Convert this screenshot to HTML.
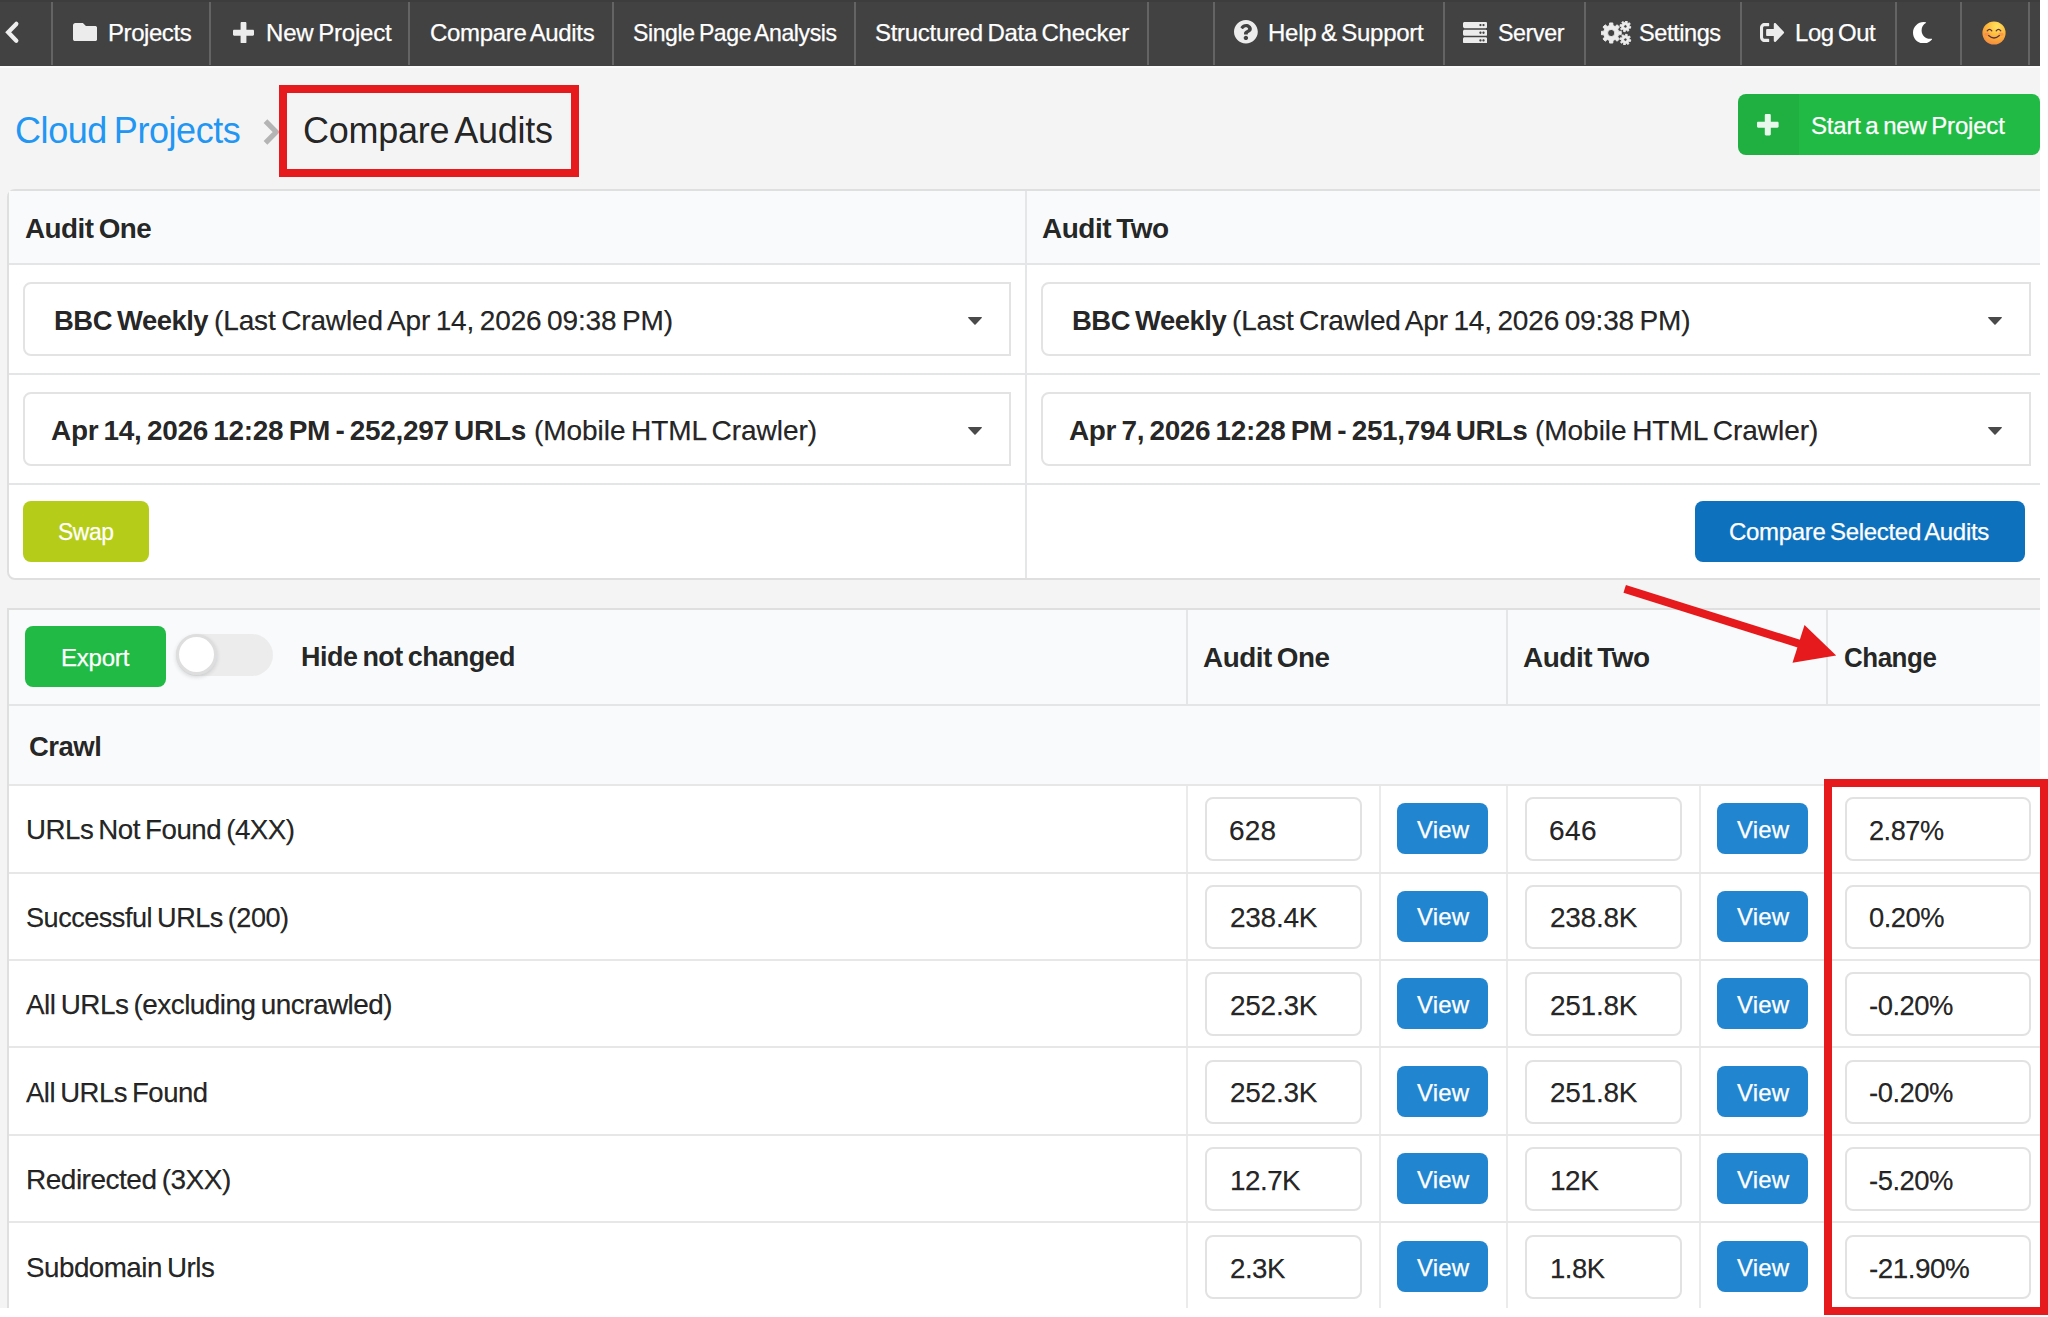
<!DOCTYPE html>
<html lang="en">
<head>
<meta charset="utf-8">
<title>Compare Audits - Cloud Projects</title>
<style>html,body{margin:0;padding:0;background:#fff;}
body{width:2048px;height:1317px;overflow:hidden;position:relative;font-family:"Liberation Sans",sans-serif;color:rgba(0,0,0,.87);}
#page{position:absolute;left:0;top:0;width:2040px;height:1307.5px;background:#f4f4f4;overflow:hidden;}
#page *, .red, .mask, svg.i{position:absolute;box-sizing:border-box;}
.t{-webkit-text-stroke:.25px currentColor;transform-origin:0 50%;white-space:nowrap;line-height:1;margin:0;font-weight:400;text-decoration:none;font-style:normal;}
h1,h3{margin:0;font-weight:400;}
#nav{left:0;top:0;width:2040px;height:66px;background:#424242;border-top:2px solid #3c3d3c;box-shadow:0 2px 0 #fbfbfb;}
#nav .dv{top:0;width:2px;height:63px;background:#646464;}
#nav .ni{left:0;top:-2px;width:0;height:0;}
.card,.tbl{background:#fff;border:2px solid #dfdfe0;border-radius:8px;}
.tbl{border-radius:0;}
.hd{background:#f9fafb;}
.hl{background:#e4e5e6;}
.vl{background:#e5e6e7;}
.hl2{background:#e7e7e8;}
.vl2{background:#ebebec;}
.sel{background:#fff;border:2px solid #e3e3e4;border-radius:8px 0 0 8px;}
.inp{background:#fff;border:2px solid #e2e2e3;border-radius:8px;}
.btn{border-radius:8px;display:block;}

.green{background:#21ba45;}
.olive{background:#b5cc18;}
.blue{background:#2185d0;}
.blue2{background:#0e71bd;}
.start .ic{left:0;top:0;height:100%;background:rgba(0,0,0,.05);border-radius:8px 0 0 8px;}
.tog{width:97.5px;height:41.5px;border-radius:21px;background:#ececed;}
.tog i{left:0;top:0;width:41px;height:41px;border-radius:50%;background:#fff;box-shadow:0 2px 4px rgba(34,36,38,.16),0 0 0 3px rgba(34,36,38,.15) inset;}
.red{border:8px solid #e61a1c;}
.mask{background:#fff;}
b.t,h3.t,label.t,.crumbs .t{-webkit-text-stroke:0;}
</style>
</head>
<body>
<div id="page">
<nav id="nav">
<i class="dv" style="left:51px"></i><i class="dv" style="left:209px"></i><i class="dv" style="left:408.2px"></i><i class="dv" style="left:611.7px"></i><i class="dv" style="left:854px"></i><i class="dv" style="left:1146.9px"></i><i class="dv" style="left:1212.8px"></i><i class="dv" style="left:1443.1px"></i><i class="dv" style="left:1583.6px"></i><i class="dv" style="left:1739.8px"></i><i class="dv" style="left:1894.9px"></i><i class="dv" style="left:1959.8px"></i><i class="dv" style="left:2028px"></i>
<a class="ni"><svg class="i" style="left:3px;top:19px" width="20" height="27" viewBox="3 19 20 27" preserveAspectRatio="none"><path d="M16.3 23.9L8.2 32.3L16.3 40.7" fill="none" stroke="#eeeeee" stroke-width="4.3" stroke-linecap="round" stroke-linejoin="miter"/></svg></a>
<a class="ni"><svg class="i" style="left:73px;top:23.1px" width="24.3" height="18.2" viewBox="0 64 512 384" preserveAspectRatio="none"><path d="M464 128H272l-64-64H48C21.49 64 0 85.49 0 112v288c0 26.51 21.49 48 48 48h416c26.51 0 48-21.49 48-48V176c0-26.51-21.49-48-48-48z" fill="#ececec"/></svg><span class="t" id="n1" style="left:108.00px;top:21.01px;font-size:24px;letter-spacing:-0.432px;color:#fff;">Projects</span></a>
<a class="ni"><svg class="i" style="left:233.1px;top:21.5px" width="21" height="21.5" viewBox="0 32 448 448" preserveAspectRatio="none"><path d="M448 294.2v-76.4c0-13.3-10.7-24-24-24H286.2V56c0-13.3-10.7-24-24-24h-76.4c-13.3 0-24 10.7-24 24v137.8H24c-13.3 0-24 10.7-24 24v76.4c0 13.3 10.7 24 24 24h137.8V456c0 13.3 10.7 24 24 24h76.4c13.3 0 24-10.700 24-24V318.2H424c13.3 0 24-10.7 24-24z" fill="#ececec"/></svg><span class="t" id="n2" style="left:266.00px;top:21.01px;font-size:24px;letter-spacing:-0.183px;word-spacing:-1.80px;color:#fff;">New Project</span></a>
<a class="ni"><span class="t" id="n3" style="left:430.00px;top:21.01px;font-size:24px;letter-spacing:-0.328px;word-spacing:-1.80px;color:#fff;">Compare Audits</span></a>
<a class="ni"><span class="t" id="n4" style="left:633.00px;top:21.01px;font-size:24px;letter-spacing:-0.432px;word-spacing:-1.80px;transform:scaleX(0.9609);color:#fff;">Single Page Analysis</span></a>
<a class="ni"><span class="t" id="n5" style="left:875.00px;top:21.01px;font-size:24px;letter-spacing:-0.287px;word-spacing:-1.80px;color:#fff;">Structured Data Checker</span></a>
<a class="ni"><svg class="i" style="left:1234px;top:20.4px" width="23.8" height="23.6" viewBox="8 8 496 496" preserveAspectRatio="none"><path d="M504 256c0 136.997-111.043 248-248 248S8 392.997 8 256C8 119.083 119.043 8 256 8s248 111.083 248 248zM262.655 90c-54.497 0-89.255 22.957-116.549 63.758-3.536 5.286-2.353 12.415 2.715 16.258l34.699 26.31c5.205 3.947 12.621 3.008 16.665-2.122 17.864-22.658 30.113-35.797 57.303-35.797 20.429 0 45.698 13.148 45.698 32.958 0 14.976-12.363 22.667-32.534 33.976C247.128 238.528 216 254.941 216 296v4c0 6.627 5.373 12 12 12h56c6.627 0 12-5.373 12-12v-1.333c0-28.462 83.186-29.647 83.186-106.667 0-58.002-60.165-102-116.531-102zM256 338c-25.365 0-46 20.635-46 46 0 25.364 20.635 46 46 46s46-20.636 46-46c0-25.365-20.635-46-46-46z" fill="#ececec"/></svg><span class="t" id="n6" style="left:1268.00px;top:21.01px;font-size:24px;letter-spacing:-0.268px;word-spacing:-1.80px;color:#fff;">Help &amp; Support</span></a>
<a class="ni"><svg class="i" style="left:1463.2px;top:21.5px" width="24.3" height="21.5" viewBox="0 32 512 448" preserveAspectRatio="none"><path d="M480 160H32c-17.673 0-32-14.327-32-32V64c0-17.673 14.327-32 32-32h448c17.673 0 32 14.327 32 32v64c0 17.673-14.327 32-32 32zm-48-88c-13.255 0-24 10.745-24 24s10.745 24 24 24 24-10.745 24-24-10.745-24-24-24zm-64 0c-13.255 0-24 10.745-24 24s10.745 24 24 24 24-10.745 24-24-10.745-24-24-24zm112 248H32c-17.673 0-32-14.327-32-32v-64c0-17.673 14.327-32 32-32h448c17.673 0 32 14.327 32 32v64c0 17.673-14.327 32-32 32zm-48-88c-13.255 0-24 10.745-24 24s10.745 24 24 24 24-10.745 24-24-10.745-24-24-24zm-64 0c-13.255 0-24 10.745-24 24s10.745 24 24 24 24-10.745 24-24-10.745-24-24-24zm112 248H32c-17.673 0-32-14.327-32-32v-64c0-17.673 14.327-32 32-32h448c17.673 0 32 14.327 32 32v64c0 17.673-14.327 32-32 32zm-48-88c-13.255 0-24 10.745-24 24s10.745 24 24 24 24-10.745 24-24-10.745-24-24-24zm-64 0c-13.255 0-24 10.745-24 24s10.745 24 24 24 24-10.745 24-24-10.745-24-24-24z" fill="#ececec"/></svg><span class="t" id="n7" style="left:1498.00px;top:21.01px;font-size:24px;letter-spacing:-0.432px;transform:scaleX(0.9692);color:#fff;">Server</span></a>
<a class="ni"><svg class="i" style="left:1601.4px;top:20.5px" width="30.6" height="24" viewBox="0 0 30.6 24" preserveAspectRatio="none"><path d="M17.58 10.17L20.27 10.40L20.27 13.60L17.58 13.83L16.71 15.92L18.45 18.00L16.20 20.25L14.12 18.51L12.03 19.38L11.80 22.07L8.60 22.07L8.37 19.38L6.28 18.51L4.20 20.25L1.95 18.00L3.69 15.92L2.82 13.83L0.13 13.60L0.13 10.40L2.82 10.17L3.69 8.08L1.95 6.00L4.20 3.75L6.28 5.49L8.37 4.62L8.60 1.93L11.80 1.93L12.03 4.62L14.12 5.49L16.20 3.75L18.45 6.00L16.71 8.08zM13.80 12.00A3.60 3.60 0 1 0 6.60 12.00A3.60 3.60 0 1 0 13.80 12.00zM28.30 5.23L29.80 5.63L29.46 7.29L27.92 7.07L27.27 8.04L28.05 9.38L26.64 10.31L25.71 9.07L24.57 9.30L24.17 10.80L22.51 10.46L22.73 8.92L21.76 8.27L20.42 9.05L19.49 7.64L20.73 6.71L20.50 5.57L19.00 5.17L19.34 3.51L20.88 3.73L21.53 2.76L20.75 1.42L22.16 0.49L23.09 1.73L24.23 1.50L24.63 0.00L26.29 0.34L26.07 1.88L27.04 2.53L28.38 1.75L29.31 3.16L28.07 4.09zM26.10 5.40A1.70 1.70 0 1 0 22.70 5.40A1.70 1.70 0 1 0 26.10 5.40zM28.30 18.43L29.80 18.83L29.46 20.49L27.92 20.27L27.27 21.24L28.05 22.58L26.64 23.51L25.71 22.27L24.57 22.50L24.17 24.00L22.51 23.66L22.73 22.12L21.76 21.47L20.42 22.25L19.49 20.84L20.73 19.91L20.50 18.77L19.00 18.37L19.34 16.71L20.88 16.93L21.53 15.96L20.75 14.62L22.16 13.69L23.09 14.93L24.23 14.70L24.63 13.20L26.29 13.54L26.07 15.08L27.04 15.73L28.38 14.95L29.31 16.36L28.07 17.29zM26.10 18.60A1.70 1.70 0 1 0 22.70 18.60A1.70 1.70 0 1 0 26.10 18.60z" fill="#ececec" fill-rule="evenodd" stroke="#ececec" stroke-width="0.9" stroke-linejoin="round"/></svg><span class="t" id="n8" style="left:1639.00px;top:21.01px;font-size:24px;letter-spacing:-0.432px;transform:scaleX(0.9808);color:#fff;">Settings</span></a>
<a class="ni"><svg class="i" style="left:1760.1px;top:23px" width="24.5" height="19" viewBox="0 64 512 384" preserveAspectRatio="none"><path d="M497 273L329 441c-15 15-41 4.5-41-17v-96H152c-13.3 0-24-10.7-24-24v-96c0-13.3 10.7-24 24-24h136V88c0-21.4 25.9-32 41-17l168 168c9.3 9.4 9.3 24.6 0 34zM192 436v-40c0-6.6-5.4-12-12-12H96c-17.7 0-32-14.3-32-32V160c0-17.7 14.3-32 32-32h84c6.6 0 12-5.4 12-12V76c0-6.600-5.4-12-12-12H96c-53 0-96 43-96 96v192c0 53 43 96 96 96h84c6.6 0 12-5.4 12-12z" fill="#ececec"/></svg><span class="t" id="n9" style="left:1795.00px;top:21.01px;font-size:24px;letter-spacing:-0.432px;word-spacing:-1.80px;transform:scaleX(0.9971);color:#fff;">Log Out</span></a>
<a class="ni"><svg class="i" style="left:1912.6px;top:21.5px" width="19.2" height="21.5" viewBox="27 0 458 512" preserveAspectRatio="none"><path d="M283.211 512c78.962 0 151.079-35.925 198.857-94.792 7.068-8.708-.639-21.43-11.562-19.35-124.203 23.654-238.262-71.576-238.262-196.954 0-72.222 38.662-138.635 101.498-174.394 9.686-5.512 7.25-20.197-3.756-22.23A258.156 258.156 0 0 0 283.211 0c-141.309 0-256 114.511-256 256 0 141.309 114.511 256 256 256z" fill="#ffffff"/></svg></a>
<a class="ni"><svg class="i" style="left:1982px;top:21.3px" width="24" height="24" viewBox="0 0 24 24" preserveAspectRatio="none"><title>😊</title><defs><radialGradient id="eg" cx="0.62" cy="0.22" r="0.95"><stop offset="0" stop-color="#ffe55e"/><stop offset="0.45" stop-color="#fdb73a"/><stop offset="0.8" stop-color="#f6913c"/><stop offset="1" stop-color="#ef6aa0"/></radialGradient></defs><circle cx="12" cy="12" r="11.6" fill="url(#eg)"/><ellipse cx="5" cy="13.2" rx="2.6" ry="1.8" fill="#f4705e" opacity=".45"/><ellipse cx="19" cy="13.2" rx="2.6" ry="1.8" fill="#f4705e" opacity=".45"/><path d="M5.2 9.8q2.3-3 4.6 0M14.2 9.8q2.3-3 4.6 0" fill="none" stroke="#5b3347" stroke-width="1.3" stroke-linecap="round"/><path d="M6.6 14.6q5.4 4.8 10.800 0" fill="none" stroke="#5b3347" stroke-width="1.3" stroke-linecap="round"/></svg></a>
</nav>
<h1 class="crumbs" style="left:0;top:0"><a class="t" id="b1" style="left:15.00px;top:113.01px;font-size:36px;letter-spacing:-0.428px;word-spacing:-2.70px;color:#2196f3;">Cloud Projects</a><svg class="i" style="left:260px;top:116px" width="22" height="32" viewBox="260 116 22 32" preserveAspectRatio="none"><path d="M265.5 121.2L276.2 132L265.5 142.800" fill="none" stroke="#b4b4b4" stroke-width="5.2" stroke-linecap="butt" stroke-linejoin="miter"/></svg><span class="t" id="b2" style="left:303.00px;top:113.01px;font-size:36px;letter-spacing:-0.264px;word-spacing:-2.70px;">Compare Audits</span></h1>
<a class="btn green start" style="left:1738px;top:94.3px;width:302px;height:60.4px;"><b class="ic" style="width:60.5px"></b><svg class="i" style="left:19.4px;top:19.9px" width="21.6" height="21.4" viewBox="0 32 448 448" preserveAspectRatio="none"><path d="M448 294.2v-76.4c0-13.3-10.7-24-24-24H286.2V56c0-13.3-10.7-24-24-24h-76.4c-13.3 0-24 10.7-24 24v137.8H24c-13.3 0-24 10.7-24 24v76.4c0 13.3 10.7 24 24 24h137.8V456c0 13.3 10.7 24 24 24h76.4c13.3 0 24-10.700 24-24V318.2H424c13.3 0 24-10.7 24-24z" fill="#e9f8ec"/></svg><span class="t" id="sp" style="left:73.00px;top:19.71px;font-size:24px;letter-spacing:-0.198px;word-spacing:-1.80px;color:#fff;">Start a new Project</span></a>
<section class="card" style="left:7px;top:189px;width:2040px;height:391px">
</section>
<div class="hd" style="left:9px;top:191px;width:2031px;height:72px;"></div>
<div class="hl" style="left:9px;top:263px;width:2031px;height:2px;"></div><div class="hl" style="left:9px;top:373px;width:2031px;height:2px;"></div><div class="hl" style="left:9px;top:483px;width:2031px;height:2px;"></div><div class="vl" style="left:1025px;top:191px;width:2px;height:387px;"></div>
<h3 class="t" id="h1" style="left:25.00px;top:215.00px;font-size:28px;font-weight:700;letter-spacing:-0.504px;word-spacing:-2.10px;transform:scaleX(0.9937);">Audit One</h3><h3 class="t" id="h2" style="left:1042.00px;top:215.00px;font-size:28px;font-weight:700;letter-spacing:-0.504px;word-spacing:-2.10px;">Audit Two</h3>
<div class="sel" style="left:23px;top:282px;width:988px;height:74px;"></div><b class="t" id="s1a" style="left:54.00px;top:307.00px;font-size:28px;font-weight:700;letter-spacing:-0.504px;word-spacing:-2.10px;transform:scaleX(0.9796);">BBC Weekly</b><span class="t" id="s1b" style="left:214.00px;top:307.00px;font-size:28px;letter-spacing:-0.130px;word-spacing:-2.10px;">(Last Crawled Apr 14, 2026 09:38 PM)</span><svg class="i" style="left:968px;top:317.2px" width="14" height="8" viewBox="0 0 14 8" preserveAspectRatio="none"><path d="M0.6 0h12.8q0.9 0.1 0.3 0.9L7.6 7.6q-0.6 0.5-1.2 0L0.3 0.9q-0.6-0.8 0.3-0.9z" fill="#4a4a4a"/></svg>
<div class="sel" style="left:1041px;top:282px;width:990px;height:74px;"></div><b class="t" id="s2a" style="left:1072.00px;top:307.00px;font-size:28px;font-weight:700;letter-spacing:-0.504px;word-spacing:-2.10px;transform:scaleX(0.9803);">BBC Weekly</b><span class="t" id="s2b" style="left:1232.00px;top:307.00px;font-size:28px;letter-spacing:-0.146px;word-spacing:-2.10px;">(Last Crawled Apr 14, 2026 09:38 PM)</span><svg class="i" style="left:1988px;top:317.2px" width="14" height="8" viewBox="0 0 14 8" preserveAspectRatio="none"><path d="M0.6 0h12.8q0.9 0.1 0.3 0.9L7.6 7.6q-0.6 0.5-1.2 0L0.3 0.9q-0.6-0.8 0.3-0.9z" fill="#4a4a4a"/></svg>
<div class="sel" style="left:23px;top:392px;width:988px;height:74px;"></div><b class="t" id="s3a" style="left:51.00px;top:417.00px;font-size:28px;font-weight:700;letter-spacing:-0.320px;word-spacing:-2.10px;">Apr 14, 2026 12:28 PM - 252,297 URLs</b><span class="t" id="s3b" style="left:534.00px;top:417.00px;font-size:28px;letter-spacing:-0.057px;word-spacing:-2.10px;">(Mobile HTML Crawler)</span><svg class="i" style="left:968px;top:427.2px" width="14" height="8" viewBox="0 0 14 8" preserveAspectRatio="none"><path d="M0.6 0h12.8q0.9 0.1 0.3 0.9L7.6 7.6q-0.6 0.5-1.2 0L0.3 0.9q-0.6-0.8 0.3-0.9z" fill="#4a4a4a"/></svg>
<div class="sel" style="left:1041px;top:392px;width:990px;height:74px;"></div><b class="t" id="s4a" style="left:1069.00px;top:417.00px;font-size:28px;font-weight:700;letter-spacing:-0.357px;word-spacing:-2.10px;">Apr 7, 2026 12:28 PM - 251,794 URLs</b><span class="t" id="s4b" style="left:1535.00px;top:417.00px;font-size:28px;letter-spacing:-0.042px;word-spacing:-2.10px;">(Mobile HTML Crawler)</span><svg class="i" style="left:1988px;top:427.2px" width="14" height="8" viewBox="0 0 14 8" preserveAspectRatio="none"><path d="M0.6 0h12.8q0.9 0.1 0.3 0.9L7.6 7.6q-0.6 0.5-1.2 0L0.3 0.9q-0.6-0.8 0.3-0.9z" fill="#4a4a4a"/></svg>
<a class="btn olive" style="left:23px;top:501px;width:126px;height:61px;"><span class="t" id="sw" style="left:35.00px;top:19.01px;font-size:24px;letter-spacing:-0.432px;transform:scaleX(0.9514);color:#fff;">Swap</span></a><a class="btn blue2" style="left:1694.6px;top:501px;width:330.8px;height:61px;"><span class="t" id="cs" style="left:34.40px;top:19.01px;font-size:24px;letter-spacing:-0.315px;word-spacing:-1.80px;color:#fff;">Compare Selected Audits</span></a>
<section class="tbl" style="left:7px;top:608px;width:2040px;height:720px"></section>
<div class="hd" style="left:9px;top:610px;width:2031px;height:174px;"></div><div class="hl" style="left:9px;top:704px;width:2031px;height:2px;"></div><div class="vl" style="left:1186px;top:610px;width:2px;height:94px;"></div><div class="vl" style="left:1506px;top:610px;width:2px;height:94px;"></div><div class="vl" style="left:1826px;top:610px;width:2px;height:94px;"></div>
<a class="btn green" style="left:25px;top:626px;width:141px;height:61px;"><span class="t" id="ex" style="left:36.00px;top:20.01px;font-size:24px;letter-spacing:-0.208px;color:#fff;">Export</span></a><span class="tog" style="left:175.8px;top:634px"><i></i></span><label class="t" id="hn" style="left:301.00px;top:643.00px;font-size:28px;font-weight:700;letter-spacing:-0.504px;word-spacing:-2.10px;transform:scaleX(0.9615);">Hide not changed</label><b class="t" id="t1" style="left:1203.00px;top:644.00px;font-size:28px;font-weight:700;letter-spacing:-0.504px;word-spacing:-2.10px;transform:scaleX(0.9956);">Audit One</b><b class="t" id="t2" style="left:1523.00px;top:644.00px;font-size:28px;font-weight:700;letter-spacing:-0.504px;word-spacing:-2.10px;">Audit Two</b><b class="t" id="t3" style="left:1844.00px;top:644.00px;font-size:28px;font-weight:700;letter-spacing:-0.504px;transform:scaleX(0.9267);">Change</b>
<b class="t" id="cr" style="left:29.00px;top:733.00px;font-size:28px;font-weight:700;letter-spacing:-0.504px;transform:scaleX(0.9813);">Crawl</b>
<div class="hl2" style="left:9px;top:784px;width:2031px;height:2px;"></div><div class="vl2" style="left:1186px;top:786px;width:2px;height:86px;"></div><div class="vl2" style="left:1379px;top:786px;width:2px;height:86px;"></div><div class="vl2" style="left:1506px;top:786px;width:2px;height:86px;"></div><div class="vl2" style="left:1699px;top:786px;width:2px;height:86px;"></div><div class="vl2" style="left:1826px;top:786px;width:2px;height:86px;"></div><span class="t" id="r0l" style="left:26.00px;top:816.00px;font-size:28px;letter-spacing:-0.504px;word-spacing:-2.10px;transform:scaleX(0.9889);">URLs Not Found (4XX)</span><div class="inp" style="left:1205px;top:797px;width:156.5px;height:64px;"></div><span class="t" id="r0a" style="left:1229.00px;top:817.01px;font-size:28px;letter-spacing:0.185px;">628</span><a class="btn blue sm" style="left:1397px;top:803px;width:91px;height:51px;"><span class="t" id="r0v" style="left:20.00px;top:15.01px;font-size:24px;letter-spacing:0.180px;color:#fff;">View</span></a><div class="inp" style="left:1525px;top:797px;width:156.5px;height:64px;"></div><span class="t" id="r0b" style="left:1549.00px;top:817.01px;font-size:28px;letter-spacing:0.430px;">646</span><a class="btn blue sm" style="left:1717px;top:803px;width:91px;height:51px;"><span class="t" id="r0w" style="left:20.00px;top:15.01px;font-size:24px;letter-spacing:0.183px;color:#fff;">View</span></a><div class="inp" style="left:1845px;top:797px;width:186px;height:64px;"></div><span class="t" id="r0c" style="left:1869.00px;top:817.01px;font-size:28px;letter-spacing:-0.504px;transform:scaleX(0.9702);">2.87%</span>
<div class="hl2" style="left:9px;top:872px;width:2031px;height:2px;"></div><div class="vl2" style="left:1186px;top:874px;width:2px;height:85px;"></div><div class="vl2" style="left:1379px;top:874px;width:2px;height:85px;"></div><div class="vl2" style="left:1506px;top:874px;width:2px;height:85px;"></div><div class="vl2" style="left:1699px;top:874px;width:2px;height:85px;"></div><div class="vl2" style="left:1826px;top:874px;width:2px;height:85px;"></div><span class="t" id="r1l" style="left:26.00px;top:904.01px;font-size:28px;letter-spacing:-0.504px;word-spacing:-2.10px;transform:scaleX(0.9671);">Successful URLs (200)</span><div class="inp" style="left:1205px;top:885px;width:156.5px;height:64px;"></div><span class="t" id="r1a" style="left:1230.00px;top:904.01px;font-size:28px;letter-spacing:-0.262px;">238.4K</span><a class="btn blue sm" style="left:1397px;top:891px;width:91px;height:51px;"><span class="t" id="r1v" style="left:20.00px;top:14.00px;font-size:24px;letter-spacing:0.180px;color:#fff;">View</span></a><div class="inp" style="left:1525px;top:885px;width:156.5px;height:64px;"></div><span class="t" id="r1b" style="left:1550.00px;top:904.01px;font-size:28px;letter-spacing:-0.262px;">238.8K</span><a class="btn blue sm" style="left:1717px;top:891px;width:91px;height:51px;"><span class="t" id="r1w" style="left:20.00px;top:14.00px;font-size:24px;letter-spacing:0.183px;color:#fff;">View</span></a><div class="inp" style="left:1845px;top:885px;width:186px;height:64px;"></div><span class="t" id="r1c" style="left:1869.00px;top:904.01px;font-size:28px;letter-spacing:-0.504px;transform:scaleX(0.9761);">0.20%</span>
<div class="hl2" style="left:9px;top:959px;width:2031px;height:2px;"></div><div class="vl2" style="left:1186px;top:961px;width:2px;height:85px;"></div><div class="vl2" style="left:1379px;top:961px;width:2px;height:85px;"></div><div class="vl2" style="left:1506px;top:961px;width:2px;height:85px;"></div><div class="vl2" style="left:1699px;top:961px;width:2px;height:85px;"></div><div class="vl2" style="left:1826px;top:961px;width:2px;height:85px;"></div><span class="t" id="r2l" style="left:26.00px;top:991.00px;font-size:28px;letter-spacing:-0.504px;word-spacing:-2.10px;transform:scaleX(0.9958);">All URLs (excluding uncrawled)</span><div class="inp" style="left:1205px;top:972px;width:156.5px;height:64px;"></div><span class="t" id="r2a" style="left:1230.00px;top:992.01px;font-size:28px;letter-spacing:-0.262px;">252.3K</span><a class="btn blue sm" style="left:1397px;top:978px;width:91px;height:51px;"><span class="t" id="r2v" style="left:20.00px;top:15.01px;font-size:24px;letter-spacing:0.180px;color:#fff;">View</span></a><div class="inp" style="left:1525px;top:972px;width:156.5px;height:64px;"></div><span class="t" id="r2b" style="left:1550.00px;top:992.01px;font-size:28px;letter-spacing:-0.262px;">251.8K</span><a class="btn blue sm" style="left:1717px;top:978px;width:91px;height:51px;"><span class="t" id="r2w" style="left:20.00px;top:15.01px;font-size:24px;letter-spacing:0.183px;color:#fff;">View</span></a><div class="inp" style="left:1845px;top:972px;width:186px;height:64px;"></div><span class="t" id="r2c" style="left:1869.00px;top:992.01px;font-size:28px;letter-spacing:-0.504px;transform:scaleX(0.9791);">-0.20%</span>
<div class="hl2" style="left:9px;top:1046px;width:2031px;height:2px;"></div><div class="vl2" style="left:1186px;top:1048px;width:2px;height:86px;"></div><div class="vl2" style="left:1379px;top:1048px;width:2px;height:86px;"></div><div class="vl2" style="left:1506px;top:1048px;width:2px;height:86px;"></div><div class="vl2" style="left:1699px;top:1048px;width:2px;height:86px;"></div><div class="vl2" style="left:1826px;top:1048px;width:2px;height:86px;"></div><span class="t" id="r3l" style="left:26.00px;top:1079.01px;font-size:28px;letter-spacing:-0.504px;word-spacing:-2.10px;transform:scaleX(0.9823);">All URLs Found</span><div class="inp" style="left:1205px;top:1060px;width:156.5px;height:64px;"></div><span class="t" id="r3a" style="left:1230.00px;top:1079.01px;font-size:28px;letter-spacing:-0.262px;">252.3K</span><a class="btn blue sm" style="left:1397px;top:1066px;width:91px;height:51px;"><span class="t" id="r3v" style="left:20.00px;top:15.01px;font-size:24px;letter-spacing:0.180px;color:#fff;">View</span></a><div class="inp" style="left:1525px;top:1060px;width:156.5px;height:64px;"></div><span class="t" id="r3b" style="left:1550.00px;top:1079.01px;font-size:28px;letter-spacing:-0.262px;">251.8K</span><a class="btn blue sm" style="left:1717px;top:1066px;width:91px;height:51px;"><span class="t" id="r3w" style="left:20.00px;top:15.01px;font-size:24px;letter-spacing:0.183px;color:#fff;">View</span></a><div class="inp" style="left:1845px;top:1060px;width:186px;height:64px;"></div><span class="t" id="r3c" style="left:1869.00px;top:1079.01px;font-size:28px;letter-spacing:-0.504px;transform:scaleX(0.9791);">-0.20%</span>
<div class="hl2" style="left:9px;top:1134px;width:2031px;height:2px;"></div><div class="vl2" style="left:1186px;top:1136px;width:2px;height:85px;"></div><div class="vl2" style="left:1379px;top:1136px;width:2px;height:85px;"></div><div class="vl2" style="left:1506px;top:1136px;width:2px;height:85px;"></div><div class="vl2" style="left:1699px;top:1136px;width:2px;height:85px;"></div><div class="vl2" style="left:1826px;top:1136px;width:2px;height:85px;"></div><span class="t" id="r4l" style="left:26.00px;top:1166.01px;font-size:28px;letter-spacing:-0.492px;word-spacing:-2.10px;">Redirected (3XX)</span><div class="inp" style="left:1205px;top:1147px;width:156.5px;height:64px;"></div><span class="t" id="r4a" style="left:1230.00px;top:1167.01px;font-size:28px;letter-spacing:-0.504px;transform:scaleX(0.9932);">12.7K</span><a class="btn blue sm" style="left:1397px;top:1153px;width:91px;height:51px;"><span class="t" id="r4v" style="left:20.00px;top:15.00px;font-size:24px;letter-spacing:0.180px;color:#fff;">View</span></a><div class="inp" style="left:1525px;top:1147px;width:156.5px;height:64px;"></div><span class="t" id="r4b" style="left:1550.00px;top:1167.01px;font-size:28px;letter-spacing:-0.504px;">12K</span><a class="btn blue sm" style="left:1717px;top:1153px;width:91px;height:51px;"><span class="t" id="r4w" style="left:20.00px;top:15.00px;font-size:24px;letter-spacing:0.183px;color:#fff;">View</span></a><div class="inp" style="left:1845px;top:1147px;width:186px;height:64px;"></div><span class="t" id="r4c" style="left:1869.00px;top:1167.01px;font-size:28px;letter-spacing:-0.504px;transform:scaleX(0.9791);">-5.20%</span>
<div class="hl2" style="left:9px;top:1221px;width:2031px;height:2px;"></div><div class="vl2" style="left:1186px;top:1223px;width:2px;height:86px;"></div><div class="vl2" style="left:1379px;top:1223px;width:2px;height:86px;"></div><div class="vl2" style="left:1506px;top:1223px;width:2px;height:86px;"></div><div class="vl2" style="left:1699px;top:1223px;width:2px;height:86px;"></div><div class="vl2" style="left:1826px;top:1223px;width:2px;height:86px;"></div><span class="t" id="r5l" style="left:26.00px;top:1254.00px;font-size:28px;letter-spacing:-0.504px;word-spacing:-2.10px;transform:scaleX(0.9912);">Subdomain Urls</span><div class="inp" style="left:1205px;top:1235px;width:156.5px;height:64px;"></div><span class="t" id="r5a" style="left:1230.00px;top:1255.01px;font-size:28px;letter-spacing:-0.504px;transform:scaleX(0.9886);">2.3K</span><a class="btn blue sm" style="left:1397px;top:1241px;width:91px;height:51px;"><span class="t" id="r5v" style="left:20.00px;top:15.01px;font-size:24px;letter-spacing:0.180px;color:#fff;">View</span></a><div class="inp" style="left:1525px;top:1235px;width:156.5px;height:64px;"></div><span class="t" id="r5b" style="left:1550.00px;top:1255.01px;font-size:28px;letter-spacing:-0.504px;transform:scaleX(0.9798);">1.8K</span><a class="btn blue sm" style="left:1717px;top:1241px;width:91px;height:51px;"><span class="t" id="r5w" style="left:20.00px;top:15.01px;font-size:24px;letter-spacing:0.183px;color:#fff;">View</span></a><div class="inp" style="left:1845px;top:1235px;width:186px;height:64px;"></div><span class="t" id="r5c" style="left:1869.00px;top:1255.01px;font-size:28px;letter-spacing:-0.504px;transform:scaleX(0.9958);">-21.90%</span>
</div>
<div class="mask" style="left:2040px;top:0;width:8px;height:1317px"></div><div class="mask" style="left:0;top:1307.5px;width:2048px;height:10px"></div>
<div class="red" style="left:279px;top:85px;width:300px;height:92px"></div>
<div class="red" style="left:1824px;top:779px;width:224px;height:536px"></div>
<svg class="i" style="left:1600px;top:570px" width="260" height="110" viewBox="1600 570 260 110"><path d="M1624.7 588.9L1802 644.6" stroke="#e61a1c" stroke-width="8.1" fill="none"/><path d="M1836.2 655.6L1792.5 662.8L1804.5 625z" fill="#e61a1c"/></svg>
</body>
</html>
